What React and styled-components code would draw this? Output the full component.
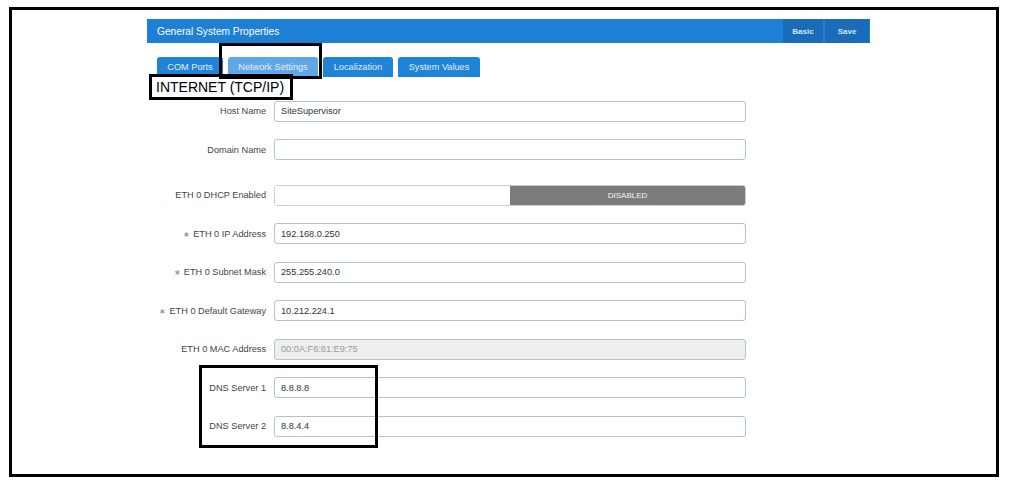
import React from "react";
import styled, { createGlobalStyle } from "styled-components";

const Global = createGlobalStyle`
  html, body { margin: 0; padding: 0; background: #ffffff; }
  body { font-family: "Liberation Sans", Arial, sans-serif; }
  * { box-sizing: border-box; }
`;

const Page = styled.div`
  padding: 7px 0 0 9px;
  width: 1015px;
  height: 486px;
`;

const Frame = styled.div`
  position: relative;
  width: 990px;
  height: 470px;
  border: 3px solid #000;
  padding: 9px 0 0 135px;
`;

const Panel = styled.div`
  width: 723px;
  display: flex;
  flex-direction: column;
`;

const Header = styled.div`
  height: 24px;
  background: #1d80d5;
  display: flex;
  align-items: stretch;
  justify-content: space-between;
  padding: 0 1px 0 10px;
`;

const Title = styled.div`
  color: #ffffff;
  font-size: 10.2px;
  display: flex;
  align-items: center;
`;

const HeaderButtons = styled.div`
  display: flex;
  gap: 2px;
`;

const HeaderButton = styled.div`
  width: ${(p) => p.$w}px;
  background: #1a6cb8;
  color: #d6e6f5;
  font-size: 8px;
  font-weight: bold;
  display: flex;
  align-items: center;
  justify-content: center;
`;

const Tabs = styled.div`
  display: flex;
  gap: 5px;
  margin-top: 14px;
  padding-left: 10px;
`;

const Tab = styled.div`
  height: 20px;
  width: ${(p) => p.$w}px;
  background: ${(p) => (p.$active ? "#5ea8e8" : "#1f83d7")};
  color: #e2eff9;
  font-size: 9.2px;
  border-radius: 3px 3px 0 0;
  display: flex;
  align-items: center;
  justify-content: center;
`;

const Heading = styled.div`
  font-size: 14px;
  line-height: 16px;
  color: #000;
  margin: 2px 0 0 9px;
`;

const Form = styled.div`
  display: flex;
  flex-direction: column;
  gap: 17.5px;
  margin-top: 5.5px;
`;

const Row = styled.div`
  display: grid;
  grid-template-columns: 119px 472px;
  column-gap: 8px;
  align-items: center;
  height: 21px;
  margin-top: ${(p) => (p.$extra ? "7px" : "0")};
`;

const Label = styled.div`
  text-align: right;
  font-size: 9.2px;
  color: #444;
  white-space: nowrap;
`;

const Star = styled.span`
  font-size: 8px;
  color: #777;
  margin-right: 3px;
`;

const Input = styled.div`
  height: 21px;
  border: 1px solid #aac4d6;
  border-radius: 3px;
  background: ${(p) => (p.$disabled ? "#eeeeee" : "#ffffff")};
  color: ${(p) => (p.$disabled ? "#9a9a9a" : "#333")};
  font-size: 9.2px;
  padding-left: 6px;
  display: flex;
  align-items: center;
`;

const Toggle = styled.div`
  height: 21px;
  border: 1px solid #c4cfd6;
  border-radius: 3px;
  display: grid;
  grid-template-columns: 1fr 1fr;
  overflow: hidden;
`;

const ToggleOff = styled.div`
  background: #ffffff;
`;

const ToggleOn = styled.div`
  background: #7b7b7b;
  color: #f4f4f4;
  font-size: 8px;
  display: flex;
  align-items: center;
  justify-content: center;
`;

const Mark = styled.div`
  position: absolute;
  left: ${(p) => p.$x}px;
  top: ${(p) => p.$y}px;
  width: ${(p) => p.$w}px;
  height: ${(p) => p.$h}px;
  border: 3px solid #000;
  pointer-events: none;
`;

const rows = [
  { label: "Host Name", value: "SiteSupervisor" },
  { label: "Domain Name", value: "" },
  { label: "ETH 0 DHCP Enabled", toggle: true, extra: true },
  { label: "ETH 0 IP Address", value: "192.168.0.250", req: true },
  { label: "ETH 0 Subnet Mask", value: "255.255.240.0", req: true },
  { label: "ETH 0 Default Gateway", value: "10.212.224.1", req: true },
  { label: "ETH 0 MAC Address", value: "00:0A:F6:81:E9:75", disabled: true },
  { label: "DNS Server 1", value: "8.8.8.8" },
  { label: "DNS Server 2", value: "8.8.4.4" },
];

export default function App() {
  return (
    <Page>
      <Global />
      <Frame>
        <Panel>
          <Header>
            <Title>General System Properties</Title>
            <HeaderButtons>
              <HeaderButton $w={40}>Basic</HeaderButton>
              <HeaderButton $w={44}>Save</HeaderButton>
            </HeaderButtons>
          </Header>
          <Tabs>
            <Tab $w={66}>COM Ports</Tab>
            <Tab $w={90} $active>Network Settings</Tab>
            <Tab $w={70}>Localization</Tab>
            <Tab $w={82}>System Values</Tab>
          </Tabs>
          <Heading>INTERNET (TCP/IP)</Heading>
          <Form>
            {rows.map((r) => (
              <Row key={r.label} $extra={r.extra}>
                <Label>
                  {r.req && <Star>∗</Star>}
                  {r.label}
                </Label>
                {r.toggle ? (
                  <Toggle>
                    <ToggleOff />
                    <ToggleOn>DISABLED</ToggleOn>
                  </Toggle>
                ) : (
                  <Input $disabled={r.disabled}>{r.value}</Input>
                )}
              </Row>
            ))}
          </Form>
        </Panel>
        <Mark $x={206.5} $y={32.5} $w={103.5} $h={36} />
        <Mark $x={136.5} $y={64} $w={144} $h={26} />
        <Mark $x={186.5} $y={354.5} $w={179} $h={83} />
      </Frame>
    </Page>
  );
}
